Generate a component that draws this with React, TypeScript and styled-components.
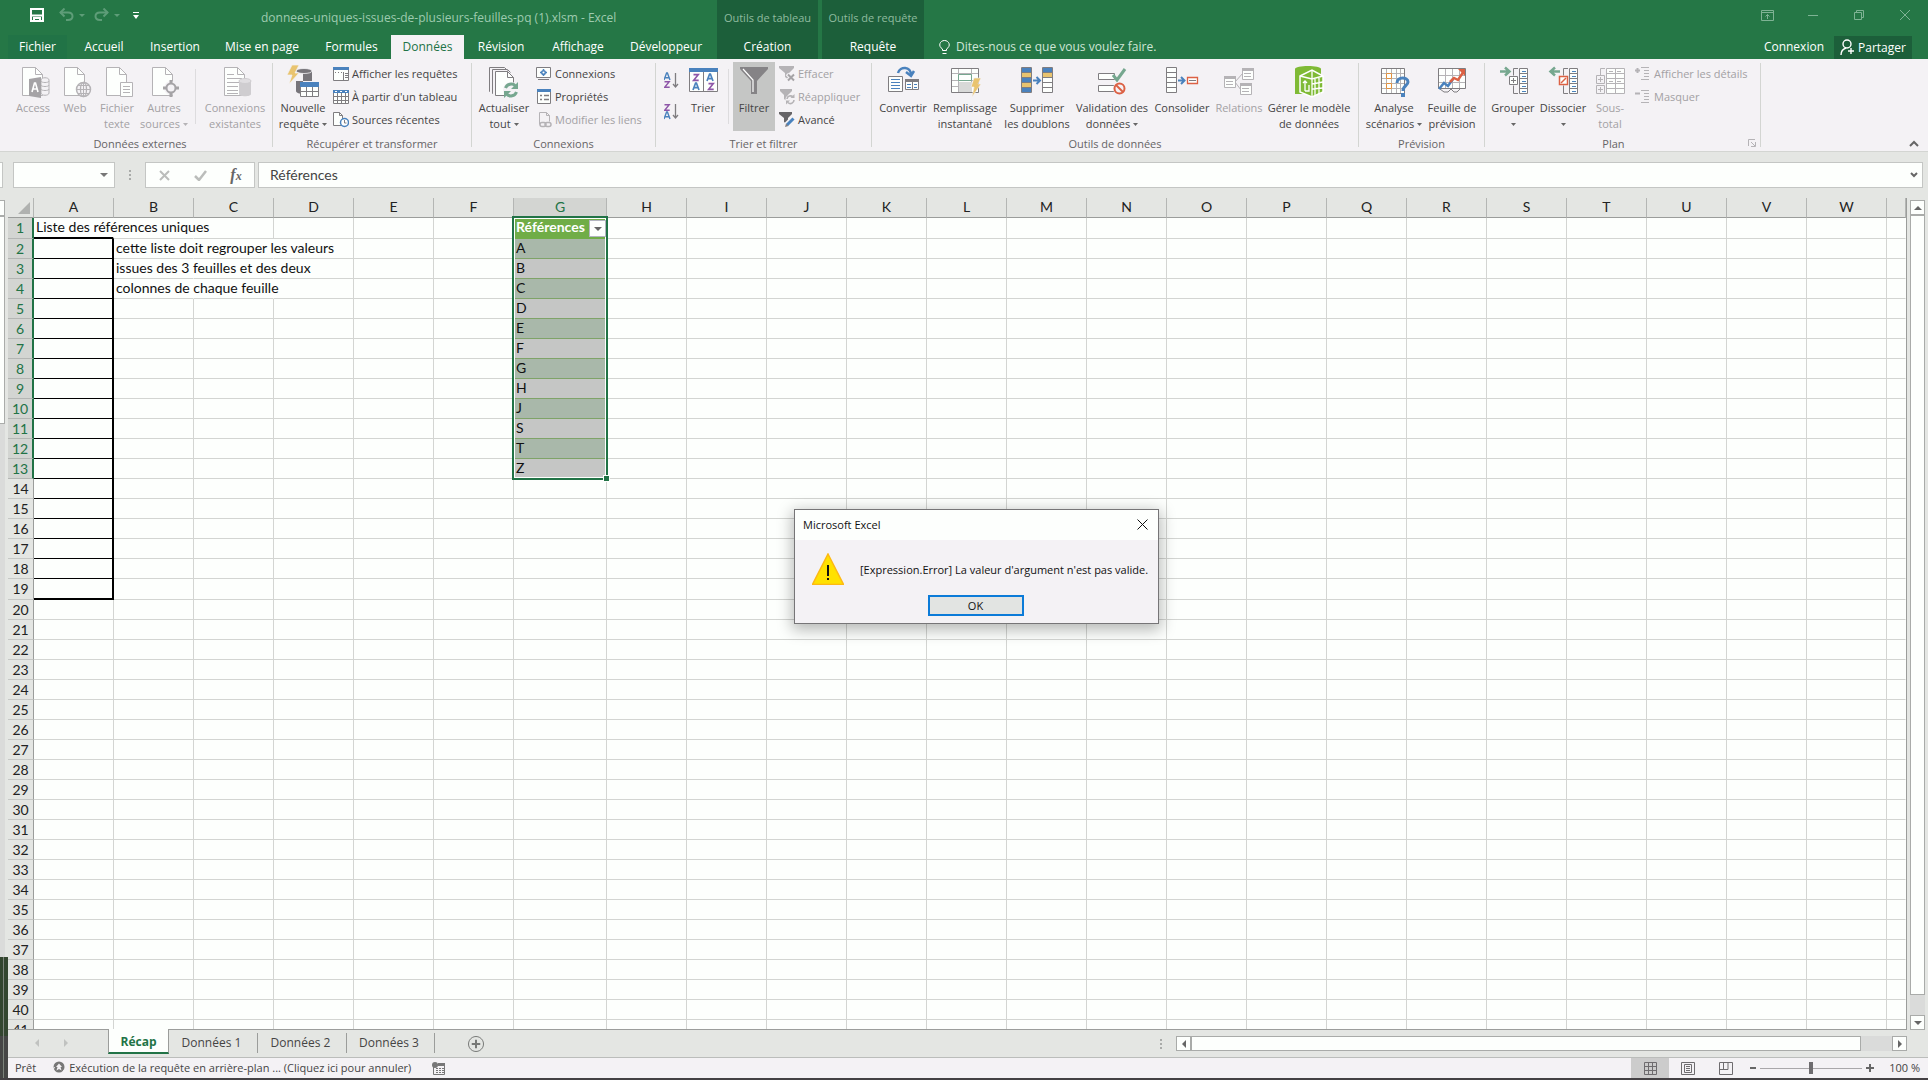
import React from "react";
import styled, { createGlobalStyle, css } from "styled-components";

const c = {
  green: "#257746",
  darkGreen: "#1c5f3a",
  accent: "#217346",
  ribbon: "#f4f2f5",
  chrome: "#e4e6e3",
  white: "#fdfffd",
  line: "#d3d5d2",
  edge: "#9b9d9b",
  text: "#444444",
  faint: "#a3a1a4",
  blue: "#4a82bd",
  gray: "#7f7d80",
  light: "#b5b3b6",
  red: "#dc6144",
  purple: "#8e56a8",
  teal: "#76a78f",
  gold: "#e9c46f",
};

const UI = `"Open Sans", "Noto Sans", sans-serif`;
const SHEET = `Lato, "Open Sans", sans-serif`;

const Global = createGlobalStyle`
  *, *::before, *::after { box-sizing: border-box; }
  body { margin: 0; font-family: ${UI}; font-size: 11px; color: ${c.text}; background: ${c.chrome}; }
  button, input { font: inherit; color: inherit; margin: 0; padding: 0; border: 0; background: none; border-radius: 0; outline: 0; }
  svg { display: block; flex: none; }
`;

const Page = styled.div`
  display: flex;
  flex-direction: column;
  height: 100vh;
  overflow: hidden;
`;

/* ---------- title bar and tabs ---------- */

const Header = styled.header`
  display: flex;
  flex: none;
  height: 59px;
  background: ${c.green};
  color: #ffffff;
`;
const HeaderMain = styled.div`
  flex: none;
  width: 717px;
`;
const HeaderEnd = styled.div`
  flex: 1;
`;
const TitleRow = styled.div<{ $end?: boolean }>`
  display: flex;
  align-items: center;
  height: 35px;
  justify-content: ${(p) => (p.$end ? "flex-end" : "flex-start")};
  padding: ${(p) => (p.$end ? "0 0 5px 0" : "0 0 0 30px")};
`;
const QuickAccess = styled.div`
  display: flex;
  width: 231px;
  padding-bottom: 5px;
`;
const IconButton = styled.button<{ $w: number; $ml?: number }>`
  display: flex;
  align-items: center;
  justify-content: center;
  flex: none;
  width: ${(p) => p.$w}px;
  margin-left: ${(p) => p.$ml ?? 0}px;
`;
const Title = styled.h1`
  margin: 0;
  font-size: 12px;
  line-height: 18px;
  font-weight: 400;
  color: #9ecbaf;
  white-space: nowrap;
`;
const Tabs = styled.nav`
  display: flex;
  height: 24px;
  padding-left: 8px;
`;
const Tab = styled.button<{ $w: number; $on?: boolean; $file?: boolean }>`
  flex: none;
  width: ${(p) => p.$w}px;
  font-size: 12px;
  line-height: 24px;
  white-space: nowrap;
  ${(p) => p.$on && css`background: ${c.ribbon}; color: ${c.accent};`}
  ${(p) => p.$file && css`background: ${c.accent}; margin-right: 3px;`}
`;
const Context = styled.div`
  flex: none;
  width: 101px;
  margin-right: 4px;
  background: ${c.darkGreen};
  text-align: center;
  & + & { width: 102px; margin-right: 0; }
`;
const ContextTitle = styled.div`
  height: 35px;
  line-height: 36px;
  color: #8fbb9f;
  white-space: nowrap;
`;
const TellRow = styled.div`
  display: flex;
  align-items: center;
  height: 24px;
  padding: 0 16px 0 14px;
`;
const Tell = styled.button`
  display: flex;
  align-items: center;
  gap: 5px;
  margin-right: auto;
  padding-bottom: 1px;
  font-size: 12px;
  color: #cfe6d6;
`;
const Login = styled.button`
  font-size: 12px;
  margin-right: 10px;
  padding-bottom: 1px;
`;
const Share = styled.button`
  display: flex;
  align-items: center;
  justify-content: center;
  gap: 4px;
  width: 78px;
  height: 23px;
  background: ${c.darkGreen};
  font-size: 12px;
`;

/* ---------- ribbon ---------- */

const Ribbon = styled.div`
  position: relative;
  display: flex;
  flex: none;
  height: 93px;
  padding-left: 8px;
  background: ${c.ribbon};
  border-bottom: 1px solid ${c.line};
`;
const Group = styled.section<{ $w: number }>`
  display: flex;
  flex-direction: column;
  flex: none;
  width: ${(p) => p.$w}px;
  height: 84px;
  margin-top: 4px;
  border-right: 1px solid ${c.line};
`;
const Tools = styled.div`
  display: flex;
  flex: none;
  height: 72px;
  padding-left: 4px;
`;
const GroupName = styled.div`
  display: flex;
  align-items: center;
  flex: none;
  height: 16px;
  color: #666466;
`;
const GroupText = styled.span`
  flex: 1;
  text-align: center;
`;
const Big = styled.button<{ $w: number; $off?: boolean; $on?: boolean }>`
  display: flex;
  flex-direction: column;
  align-items: center;
  flex: none;
  width: ${(p) => p.$w}px;
  height: 69px;
  margin-top: -1px;
  padding-top: 4px;
  line-height: 16px;
  white-space: nowrap;
  color: ${(p) => (p.$off ? c.faint : c.text)};
  background: ${(p) => (p.$on ? "#c5c6c5" : "transparent")};
  & > svg { margin-bottom: 2px; }
`;
const BigLabel = styled.span`
  display: flex;
  align-items: center;
  justify-content: center;
  flex: none;
  gap: 3px;
  height: 16px;
`;
const Split = styled.i<{ $gap: number }>`
  flex: none;
  width: 1px;
  height: 55px;
  margin: 6px ${(p) => p.$gap}px 0;
  background: #dddcde;
`;
const Stack = styled.div`
  display: flex;
  flex-direction: column;
  margin-top: -1px;
`;
const Small = styled.button<{ $off?: boolean }>`
  display: flex;
  align-items: center;
  gap: 3px;
  height: 23px;
  padding-left: 4px;
  white-space: nowrap;
  color: ${(p) => (p.$off ? c.faint : c.text)};
`;
const SortStack = styled.div`
  display: flex;
  flex-direction: column;
  gap: 11px;
  width: 22px;
  padding: 8px 0 0 4px;
`;
const Launcher = styled.button`
  width: 18px;
  padding-left: 6px;
`;
const Collapse = styled.button`
  align-self: flex-end;
  margin: 0 9px 4px auto;
`;

/* ---------- formula bar ---------- */

const FormulaBar = styled.div`
  display: flex;
  flex: none;
  height: 46px;
  padding: 10px 5px 10px 0;
`;
const Field = styled.div<{ $w?: number; $ml?: number }>`
  display: flex;
  align-items: center;
  flex: ${(p) => (p.$w ? "none" : "1")};
  width: ${(p) => (p.$w ? p.$w + "px" : "auto")};
  margin-left: ${(p) => p.$ml ?? 0}px;
  background: ${c.white};
  border: 1px solid #c4c6c4;
`;
const Stub = styled(Field)`
  border-left: 0;
`;
const NameInput = styled.input`
  flex: 1;
  min-width: 0;
`;
const FormulaInput = styled.input`
  flex: 1;
  padding-left: 11px;
  font-family: ${SHEET};
  font-size: 14px;
  line-height: 20px;
`;
const Grip = styled.div`
  display: flex;
  align-items: center;
  justify-content: center;
  width: 30px;
`;
const Fx = styled.i`
  font-family: "Liberation Serif", serif;
  font-size: 16px;
  font-weight: 700;
  line-height: 18px;
  color: #666;
  & > small { font-size: 12px; }
`;

/* ---------- work area ---------- */

const Work = styled.div`
  display: flex;
  flex: 1;
  min-height: 0;
  border-bottom: 2px solid #444144;
`;
const Behind = styled.div`
  display: flex;
  flex-direction: column;
  flex: none;
  width: 8px;
  padding-top: 2px;
`;
const BehindBox = styled.div<{ $h: number }>`
  flex: none;
  width: 5px;
  height: ${(p) => p.$h}px;
  background: ${c.white};
  border: 1px solid #aaacaa;
  border-left: 0;
`;
const BehindTrack = styled.div`
  flex: 1;
  background: linear-gradient(to right, #dadbda 5px, #e4e6e3 5px);
`;
const BehindDark = styled.div<{ $h: number; $c: string }>`
  flex: none;
  height: ${(p) => p.$h}px;
  background: linear-gradient(to right, ${(p) => p.$c} 3px, #7b837a 3px 4px, ${(p) => p.$c} 4px);
`;
const Book = styled.main`
  display: flex;
  flex-direction: column;
  flex: 1;
  min-width: 0;
`;
const SheetRow = styled.div`
  display: flex;
  flex: 1;
  min-height: 0;
`;
const SheetView = styled.div`
  flex: 1;
  min-width: 0;
  overflow: hidden;
  border-right: 1px solid ${c.edge};
  border-bottom: 1px solid ${c.edge};
  background: linear-gradient(${c.chrome} 19px, ${c.white} 19px);
`;
const Table = styled.table`
  width: 100%;
  table-layout: fixed;
  border-collapse: separate;
  border-spacing: 0;
  font-family: ${SHEET};
  font-size: 14px;
  color: #111111;
`;
const ColHead = styled.th<{ $on?: boolean }>`
  height: 20px;
  padding: 0;
  font-weight: 400;
  line-height: 17px;
  vertical-align: top;
  background: ${(p) => (p.$on ? c.line : c.chrome)};
  color: ${(p) => (p.$on ? c.accent : "#222222")};
  border-bottom: 1px solid ${c.edge};
  border-right: 1px solid #b4b6b4;
`;
const Corner = styled(ColHead)`
  & > svg { margin: 4px 3px 0 auto; }
`;
const RowHead = styled.th<{ $on: boolean; $tall: boolean }>`
  height: ${(p) => (p.$tall ? 21 : 20)}px;
  padding: 0;
  font-weight: 400;
  line-height: 19px;
  vertical-align: top;
  background: ${(p) => (p.$on ? c.line : c.chrome)};
  color: ${(p) => (p.$on ? c.accent : "#222222")};
  border-bottom: 1px solid ${(p) => (p.$on ? "#b4b6b4" : "#c6c8c6")};
  border-right: ${(p) => (p.$on ? `2px solid ${c.accent}` : `1px solid ${c.edge}`)};
`;
type CellKind = "plain" | "spill" | "box" | "boxTop" | "boxLast" | "head" | "even" | "odd";
const Cell = styled.td<{ $kind: CellKind }>`
  position: relative;
  padding: 0 0 0 2px;
  line-height: 18px;
  vertical-align: top;
  white-space: nowrap;
  border-right: 1px solid ${c.line};
  border-bottom: 1px solid ${c.line};
  ${(p) => p.$kind === "spill" && css`border-right-color: transparent;`}
  ${(p) => p.$kind === "boxTop" && css`border-right-color: transparent; border-bottom: 2px solid #000;`}
  ${(p) => p.$kind === "box" && css`border-right: 2px solid #000; border-bottom: 1px solid #000;`}
  ${(p) => p.$kind === "boxLast" && css`border-right: 2px solid #000; border-bottom: 2px solid #000;`}
  ${(p) => p.$kind === "head" && css`background: #70ad47; color: #fff; font-weight: 700; border-color: #70ad47;`}
  ${(p) => p.$kind === "even" && css`background: #a9b8aa; border-bottom-color: #7fa368;`}
  ${(p) => p.$kind === "odd" && css`background: #c5c6c5; border-bottom-color: #7fa368;`}
`;
const Selection = styled.div`
  position: absolute;
  z-index: 1;
  left: -2px;
  top: -2px;
  width: 96px;
  height: 264px;
  border: 2px solid ${c.accent};
  box-shadow: inset 0 0 0 1px ${c.white};
  pointer-events: none;
  &::after {
    content: "";
    position: absolute;
    right: -4px;
    bottom: -4px;
    width: 7px;
    height: 7px;
    background: ${c.accent};
    border: 1px solid ${c.white};
  }
`;
const FilterButton = styled.button`
  position: absolute;
  z-index: 2;
  right: 0;
  top: 2px;
  display: flex;
  align-items: center;
  justify-content: center;
  width: 17px;
  height: 17px;
  background: ${c.white};
  border: 1px solid #b3b5c0;
`;

/* ---------- scroll bars ---------- */

const VScroll = styled.div`
  display: flex;
  flex-direction: column;
  flex: none;
  width: 21px;
  padding: 2px 3px 0 3px;
`;
const HScroll = styled.div`
  display: flex;
  flex: none;
  width: 731px;
  height: 15px;
`;
const Arrow = styled.button`
  display: flex;
  align-items: center;
  justify-content: center;
  flex: none;
  width: 15px;
  height: 15px;
  background: ${c.white};
  border: 1px solid #a9aba9;
`;
const Thumb = styled.div<{ $grow: number }>`
  flex: ${(p) => p.$grow};
  background: ${c.white};
  border: 1px solid #a9aba9;
`;
const Track = styled.div<{ $grow: number }>`
  flex: ${(p) => p.$grow};
  background: #dadbda;
`;

/* ---------- sheet tabs and status ---------- */

const SheetBar = styled.div`
  display: flex;
  flex: none;
  height: 28px;
  padding-right: 21px;
  border-bottom: 1px solid #bbbdbb;
`;
const NavArrows = styled.div`
  display: flex;
  align-items: center;
  gap: 21px;
  width: 100px;
  padding: 0 0 1px 25px;
`;
const SheetTab = styled.button<{ $on?: boolean; $w: number }>`
  flex: none;
  width: ${(p) => p.$w}px;
  font-size: 12px;
  line-height: 20px;
  ${(p) =>
    p.$on
      ? css`
          margin-top: -1px;
          height: 25px;
          padding-top: 2px;
          background: ${c.white};
          color: ${c.accent};
          font-weight: 700;
          border-left: 1px solid ${c.edge};
          border-right: 1px solid ${c.edge};
          border-bottom: 2px solid ${c.accent};
        `
      : css`
          margin-top: 3px;
          height: 20px;
          padding-right: 3px;
          border-right: 1px solid ${c.edge};
        `}
`;
const AddSheet = styled.button`
  margin: 0 auto 0 33px;
`;
const SheetBarEnd = styled.div`
  display: flex;
  align-items: center;
`;
const Status = styled.footer`
  display: flex;
  align-items: center;
  flex: none;
  height: 20px;
  padding: 0 8px 0 7px;
  line-height: 15px;
  background: ${c.ribbon};
`;
const Ready = styled.span`
  padding-bottom: 2px;
`;
const Running = styled.button`
  display: flex;
  align-items: center;
  gap: 4px;
  margin: 0 20px 0 17px;
  padding-bottom: 2px;
`;
const Spacer = styled.div`
  flex: 1;
`;
const View = styled.button<{ $on?: boolean }>`
  display: flex;
  align-items: center;
  justify-content: center;
  width: 38px;
  height: 20px;
  background: ${(p) => (p.$on ? "#cccccc" : "transparent")};
`;
const ZoomArea = styled.div`
  display: flex;
  align-items: center;
  gap: 4px;
  margin-left: 5px;
`;
const Slider = styled.input`
  appearance: none;
  width: 102px;
  height: 12px;
  background: linear-gradient(#a9a7aa, #a9a7aa) center / 100% 1px no-repeat;
  &::-webkit-slider-thumb {
    appearance: none;
    width: 4px;
    height: 12px;
    background: #6e6c6f;
  }
`;
const Percent = styled.span`
  width: 42px;
  padding-bottom: 2px;
  text-align: right;
`;

/* ---------- dialog ---------- */

const Dialog = styled.div`
  position: absolute;
  z-index: 10;
  left: 794px;
  top: 509px;
  width: 365px;
  background: ${c.ribbon};
  border: 1px solid #767577;
  box-shadow: 0 4px 14px 2px rgba(0, 0, 0, 0.28);
  color: #111111;
`;
const DialogTitle = styled.div`
  display: flex;
  align-items: center;
  justify-content: space-between;
  height: 30px;
  padding: 0 10px 2px 8px;
  background: ${c.white};
`;
const DialogBody = styled.div`
  display: flex;
  align-items: center;
  gap: 16px;
  padding: 13px 0 0 17px;
  white-space: nowrap;
`;
const DialogActions = styled.div`
  display: flex;
  justify-content: center;
  padding: 10px 2px 7px 0;
`;
const OkButton = styled.button`
  width: 96px;
  height: 21px;
  background: #e2e4e2;
  border: 2px solid #0b7bd8;
`;

/* ---------- icons ---------- */

type Kids = { children: React.ReactNode };
const I32 = ({ children }: Kids) => (
  <svg width="32" height="32" viewBox="0 0 32 32" fill="none" overflow="visible" aria-hidden="true">{children}</svg>
);
const I16 = ({ children }: Kids) => (
  <svg width="16" height="16" viewBox="0 0 16 16" fill="none" aria-hidden="true">{children}</svg>
);
const Caret = ({ color = "#666", w = 5 }: { color?: string; w?: number }) => (
  <svg width={w} height="3" viewBox="0 0 5 3" preserveAspectRatio="none" aria-hidden="true"><path d="M0 0h5L2.500 3z" fill={color} /></svg>
);
const Sheet = ({ x = 5, col = c.light }: { x?: number; col?: string }) => (
  <g transform={`translate(${x} 0)`} stroke={col}><path d="M.5 1.500h13l7 7v21H.5z" fill={c.white} /><path d="M13.500 1.500v7h7" /></g>
);

const AccessIcon = () => (
  <I32><Sheet /><path d="M24 14v13c0 3 8 3 8 0V14c0-3-8-3-8 0z" fill={c.ribbon} stroke={c.light} /><path d="M24 15c0 2 8 2 8 0M24 19c0 2 8 2 8 0M24 23c0 2 8 2 8 0" stroke={c.light} /><path d="M12 13l12-2v21l-12-2z" fill="#a5a3a6" /><path d="M15 26l2.500-9h1l2.500 9M16 23h4" stroke="#fff" strokeWidth="1.600" /></I32>
);
const WebIcon = () => (
  <I32><Sheet /><circle cx="24.500" cy="23.500" r="7" fill={c.ribbon} stroke={c.light} strokeWidth="1.500" /><ellipse cx="24.500" cy="23.500" rx="3" ry="7" stroke={c.light} strokeWidth="1.300" /><path d="M17.500 23.500h14M19 19.500h11M19 27.500h11M24.500 16.500v14" stroke={c.light} /></I32>
);
const TextFileIcon = () => (
  <I32><Sheet /><path d="M19.500 16.500h12v14h-12z" fill={c.white} stroke={c.light} /><path d="M22 20.500h7M22 23.500h7M22 26.500h7" stroke={c.light} /></I32>
);
const OtherIcon = () => (
  <I32><Sheet x={4} /><circle cx="23" cy="22" r="7" fill={c.ribbon} /><circle cx="23" cy="22" r="4.500" fill={c.ribbon} stroke="#a5a3a6" strokeWidth="2" /><path d="M23 14v4M23 26v5M15 22h4M27 22h4" stroke="#a5a3a6" strokeWidth="3" /></I32>
);
const ExistingIcon = () => (
  <I32><Sheet /><path d="M8 8.500h7M8 12.500h15M8 16.500h12M8 20.500h11M8 24.500h11M8 27.500h11" stroke={c.light} /><path d="M20 15v13c0 3 12 3 12 0V15z" fill="#cfcdd0" /><ellipse cx="26" cy="15" rx="6" ry="2.500" fill="#e0dee1" stroke="#cfcdd0" /></I32>
);
const NewQueryIcon = () => (
  <I32><path d="M9 5v20c0 2 4 3 7 3V5zM9 5h16v10H9z" fill="#77757a" /><ellipse cx="17" cy="5" rx="8" ry="2.500" fill="#77757a" stroke="#f4f2f5" strokeWidth=".8" /><path d="M5-1h7L8 7h4L2 18l3-9H0z" fill={c.gold} stroke={c.ribbon} strokeWidth=".7" /><path d="M13.500 16.500h18v14h-18z" fill={c.white} stroke={c.gray} /><path d="M13 16h19v5H13z" fill={c.blue} /><path d="M14 25.500h17M19.500 21v9M25.500 21v9" stroke={c.gray} /></I32>
);
const ShowQueriesIcon = () => (
  <I16><path d="M.5 1.500h15v13H.5z" fill={c.white} stroke={c.gray} /><path d="M0 1h16v3H0z" fill={c.blue} /><path d="M10.500 6v8M2 6.500h1m2 0h1m2 0h1M12 7.500h3M12 9.500h3M12 11.500h3" stroke={c.gray} /></I16>
);
const FromTableIcon = () => (
  <I16><path d="M.5 1.500h15v13H.5z" fill={c.white} stroke={c.gray} /><path d="M0 1h16v3H0z" fill={c.blue} /><path d="M1 7.500h14M1 11.500h14M4.500 4v10M8.500 4v10M12.500 4v10" stroke={c.gray} /><path d="M2 2.500h2m3 0h2m3 0h2" stroke="#fff" /></I16>
);
const RecentIcon = () => (
  <I16><path d="M.5.5h6l3 3v10h-9z" fill={c.white} stroke={c.gray} /><path d="M6.500.5v3h3" stroke={c.gray} /><circle cx="11.500" cy="10.500" r="4" fill="#fff" stroke={c.blue} strokeWidth="1.500" /><path d="M11.500 8v3h2" stroke={c.gray} /></I16>
);
const RefreshIcon = () => (
  <I32><path d="M2 25.500h-.5v-24h15l3 3" stroke={c.gray} /><path d="M5 27.500h-.5v-24h15l3 3" stroke={c.gray} /><path d="M7.500 5.500h12l6 6v18h-18z" fill={c.white} stroke={c.gray} /><path d="M19.500 5.500v6h6" stroke={c.gray} /><circle cx="23" cy="24" r="8" fill={c.ribbon} /><path d="M17.500 22a6 6 0 0 1 10-2M28.500 26a6 6 0 0 1-10 2" stroke={c.teal} strokeWidth="3" /><path d="M30 16v7h-7zM16 32v-7h7z" fill={c.teal} /></I32>
);
const ConnectionsIcon = () => (
  <I16><path d="M.5 1.500h14v10H.5zM2 13.500h11" fill={c.white} stroke={c.gray} /><circle cx="7.500" cy="6.500" r="1.800" stroke={c.blue} strokeWidth="1.500" /><path d="M7.500 3v1.500m0 4V10M4 6.500h1.500m4 0H11" stroke={c.blue} strokeWidth="1.500" /></I16>
);
const PropertiesIcon = () => (
  <I16><path d="M1.500.5h13v14h-13z" fill={c.white} stroke={c.gray} /><path d="M1 0h14v3H1z" fill={c.blue} /><path d="M4 6.500h2m2 0h5M4 10.500h2m2 0h5" stroke={c.gray} strokeWidth="1.500" /></I16>
);
const LinksIcon = () => (
  <I16><path d="M3.500 12.500v-12h7l3 3v6" stroke={c.light} /><path d="M10.500.5v3h3" stroke={c.light} /><rect x="4" y="10.500" width="6" height="4" rx="2" stroke={c.light} strokeWidth="1.500" /><rect x="9" y="10.500" width="6" height="4" rx="2" stroke={c.light} strokeWidth="1.500" /></I16>
);
const A_UP = "M0 7l2.600-7h.8L6 7M1 4.700h4";
const Z_UP = "M.5.700h4.700L.7 6.300h5";
const SortIcon = ({ desc }: { desc?: boolean }) => (
  <svg width="15" height="20" viewBox="0 0 15 20" fill="none" aria-hidden="true">
    <g strokeWidth="1.400"><path d={desc ? Z_UP : A_UP} stroke={desc ? c.purple : c.blue} transform="translate(0 2)" /><path d={desc ? A_UP : Z_UP} stroke={desc ? c.blue : c.purple} transform="translate(0 10)" /></g>
    <path d="M11.500 2v14M9 13l2.500 3 2.500-3" stroke={c.gray} strokeWidth="1.300" />
  </svg>
);
const SortBigIcon = () => (
  <I32><path d="M2.500 2.500h28v23h-28z" fill={c.white} stroke={c.gray} /><path d="M2 2h29v4H2z" fill={c.blue} /><path d="M16.500 6v19" stroke={c.gray} /><g strokeWidth="1.700"><path d={Z_UP} stroke={c.purple} transform="translate(6 8)" /><path d={A_UP} stroke={c.blue} transform="translate(6 17)" /><path d={A_UP} stroke={c.blue} transform="translate(20 8)" /><path d={Z_UP} stroke={c.purple} transform="translate(21 17)" /></g></I32>
);
const FilterIcon = () => (
  <I32><path d="M2 1h28v2L19 15v13h-6V15L2 3z" fill="#858386" /><path d="M5 3l10 11v12" stroke="#fff" strokeWidth="1.200" /></I32>
);
const ClearIcon = () => (
  <I16><path d="M0 0h15v2l-5 5v7L6 11V7L0 2z" fill={c.light} /><path d="M8 8l7 7M15 8l-7 7" stroke={c.ribbon} strokeWidth="3.500" /><path d="M9 8.500l6 6M15 8.500l-6 6" stroke="#a5a3a6" strokeWidth="2" /></I16>
);
const ReapplyIcon = () => (
  <I16><path d="M1 0h12v2L9 6v7L5 10V6L1 2z" fill={c.light} /><circle cx="11.500" cy="10.500" r="5" fill={c.ribbon} /><path d="M8 10a3.500 3.500 0 0 1 6-2M15 11a3.500 3.500 0 0 1-6 2.500" stroke={c.light} strokeWidth="1.600" /><path d="M15.500 5v4h-4zM7 15.500v-4h4z" fill={c.light} /></I16>
);
const AdvancedIcon = () => (
  <I16><path d="M0 0h13v2L9 6v7L5 10V6L0 2z" fill="#666467" /><path d="M14 6L6 14" stroke={c.ribbon} strokeWidth="5" /><path d="M14.500 6.500L8 13" stroke={c.blue} strokeWidth="3" /><path d="M6 15l1-3.500L9.500 14z" fill={c.gray} /></I16>
);
const ConvertIcon = () => (
  <I32><path d="M1.500 10.500h14v15h-14z" fill={c.white} stroke={c.gray} /><path d="M4 13.500h9M4 16.500h9M4 19.500h9M4 22.500h9" stroke={c.blue} /><path d="M18.500 14.500h13v9h-13z" fill={c.white} stroke={c.gray} /><path d="M18 13h14v3H18z" fill={c.gray} /><path d="M25.500 16v8" stroke={c.gray} /><path d="M20 18.500h4M20 21.500h4M27 18.500h3M27 21.500h3" stroke={c.blue} /><path d="M11 7c2-7 13-7 13 2" stroke={c.blue} strokeWidth="2.500" /><path d="M19 6l5 4 3-5" stroke={c.blue} strokeWidth="2.500" /></I32>
);
const FlashFillIcon = () => (
  <I32><path d="M2.500 2.500h27v24h-27z" fill={c.white} stroke={c.gray} /><path d="M3 7.500h26M3 14.500h26M3 20.500h26M9.500 3v23M22.500 3v23" stroke={c.light} /><path d="M10 16h13v10H10z" fill="#d8d9d8" /><path d="M9.500 8.500h13v6h-13z" fill={c.white} stroke={c.teal} /><path d="M25 12h7l-3 6h3l-9 13 2-10h-3z" fill={c.gold} stroke={c.ribbon} strokeWidth=".6" /></I32>
);
const DuplicatesIcon = () => (
  <I32><path d="M1 1h9v26H1z" fill={c.blue} /><path d="M1 7h9v5H1zM1 16h9v5H1z" fill={c.gold} /><path d="M.5 1.500h10v25H.5zM1 6.500h9M1 11.500h9M1 16.500h9M1 21.500h9" stroke={c.gray} /><path d="M21.500 1.500h10v25h-10z" fill={c.white} /><path d="M22 2h9v5h-9z" fill={c.blue} /><path d="M22 7h9v5h-9z" fill={c.gold} /><path d="M21.500 1.500h10v25h-10zM22 6.500h9M22 11.500h9M22 16.500h9M22 21.500h9" stroke={c.gray} /><path d="M12 14.500h6M15.500 11l3.500 3.500-3.500 3.500" stroke={c.blue} strokeWidth="2" /></I32>
);
const ValidationIcon = () => (
  <I32><path d="M2.500 7.500h16v6h-16zM2.500 19.500h16v6h-16z" fill={c.white} stroke={c.gray} /><path d="M17 9l4 5 8-11" stroke={c.teal} strokeWidth="3" /><circle cx="23.500" cy="22.500" r="6.500" fill={c.ribbon} /><circle cx="23.500" cy="22.500" r="5" stroke={c.red} strokeWidth="2" /><path d="M20 19l7 7" stroke={c.red} strokeWidth="2" /></I32>
);
const ConsolidateIcon = () => (
  <I32><path d="M.5 1.500h10v25H.5zM1 6.500h9M1 11.500h9M1 16.500h9M1 21.500h9" fill={c.white} stroke={c.gray} /><path d="M12 14.500h6M15 11l3.500 3.500L15 18" stroke={c.blue} strokeWidth="2" /><path d="M21.500 11.500h10v6h-10z" fill={c.white} stroke={c.red} strokeWidth="1.300" /><path d="M23 14.500h7" stroke={c.gray} /></I32>
);
const RelationsIcon = () => (
  <I32><g stroke={c.light} fill={c.white}><path d="M12 16l8-9M12 16l6 8" /><path d="M1.500 11.500h11v10h-11zM19.500 2.500h11v11h-11zM17.500 17.500h11v11h-11z" /></g><path d="M1 10h12v3H1zM19 2h12v3H19zM17 17h12v3H17z" fill={c.light} /><path d="M3 15.500h7M3 18.500h7M21 7.500h7M21 10.500h7M19 22.500h7M19 25.500h7" stroke={c.light} /></I32>
);
const ModelIcon = () => (
  <I32><path d="M2 3c0-4 26-4 26 0v25H2z" fill="#7fba35" /><path d="M7 10l12-6 11 6v16l-11 5-12-5z" fill="#7fba35" stroke="#fff" strokeWidth="1.500" /><path d="M19 5v26M7 10l12 3 11-3M22 13v16M26 12v16M19 18l11-2M19 23l11-1" stroke="#fff" strokeWidth="1.300" /><path d="M12 25V15M10 17l2-2 2 2M12 25h4v-6" stroke="#fff" strokeWidth="1.300" /></I32>
);
const AnalysisIcon = () => (
  <I32><path d="M3.500 2.500h23v25h-23z" fill={c.white} stroke={c.gray} /><path d="M4 7.500h22M4 12.500h22M4 17.500h22M4 22.500h22M8.500 3v24M13.500 3v24M18.500 3v24M22.500 3v24" stroke={c.light} /><path d="M8.500 7.500h5v5h-5zM8.500 17.500h5v5h-5z" fill={c.white} stroke="#e0913f" /><path d="M19 17c0-7 11-6 11-1 0 4-5 3-5 9" stroke={c.blue} strokeWidth="3" /><path d="M23 27h4v4h-4z" fill={c.blue} /></I32>
);
const ForecastIcon = () => (
  <I32><path d="M2.500 2.500h27v20h-27z" fill={c.white} stroke={c.gray} /><path d="M3 9.500h26M3 16.500h26M9.500 3v19M16.500 3v19M23.500 3v19" stroke={c.light} /><path d="M4 23l4 3h4l3-3 3 3h3l3-3" stroke={c.gray} /><path d="M3 23l5-6 4 3 5-7" stroke={c.blue} strokeWidth="2.500" /><path d="M14 16l4-4 4 2 6-9" stroke={c.red} strokeWidth="2.500" /><path d="M22 3h7v7z" fill={c.red} /></I32>
);
const OutlineRows = () => (
  <><path d="M22.500 2.500h8v25h-8zM23 7.500h8M23 12.500h8M23 17.500h8M23 22.500h8" fill={c.white} stroke={c.gray} /><path d="M25 5.500h4M25 10.500h4M25 15.500h4M25 20.500h4M25 25.500h4" stroke={c.blue} /><path d="M21 2.500h-4.500v7M21 27.500h-4.500v-8" stroke={c.gray} /></>
);
const GroupIcon = () => (
  <I32><OutlineRows /><path d="M12.500 10.500h8v8h-8z" fill={c.white} stroke={c.gray} /><path d="M14 14.500h5M16.500 12v5" stroke={c.gray} /><path d="M3 5.500h9M8 1.500l4.500 4L8 9.500" stroke={c.teal} strokeWidth="2.500" /></I32>
);
const UngroupIcon = () => (
  <I32><OutlineRows /><path d="M12.500 10.500h8v8h-8z" fill={c.white} stroke={c.red} strokeWidth="1.500" /><path d="M14 17l5-5" stroke={c.red} strokeWidth="1.500" /><path d="M13 5.500H4M8 1.500l-4.500 4L8 9.500" stroke={c.teal} strokeWidth="2.500" /></I32>
);
const SubtotalIcon = () => (
  <I32><path d="M12.500 2.500h18v25h-18zM12 7.500h18M12 12.500h18M12 17.500h18M12 22.500h18M21.500 3v24" fill={c.white} stroke={c.light} /><path d="M11 2.500H6.500V9M2.500 9.500h8v8h-8zM2.500 19.500h8v8h-8zM4 13.500h5M6.500 11v5M4 23.500h5M6.500 21v5M15 5.500h4M15 15.500h4M23 5.500h4M23 15.500h4" stroke={c.light} /></I32>
);
const DetailIcon = ({ plus }: { plus?: boolean }) => (
  <I16><path d="M0 4.500h5" stroke={c.light} strokeWidth="2" />{plus && <path d="M2.500 2v5" stroke={c.light} strokeWidth="2" />}<path d="M6 1.500h8M9 4.500h5M9 7.500h5M9 10.500h5M6 13.500h8" stroke={c.light} /></I16>
);
const UndoIcon = ({ flip }: { flip?: boolean }) => (
  <svg width="15" height="14" viewBox="0 0 15 14" fill="none" aria-hidden="true">
    <g transform={flip ? "translate(15 0) scale(-1 1)" : undefined} stroke="#5e9d78" strokeWidth="2"><path d="M1 4.500h8c6 0 6 7.500 0 7.500H7" /><path d="M5.500.5l-4 4 4 4" /></g>
  </svg>
);
const Dots = () => (
  <svg width="2" height="10" viewBox="0 0 2 10" aria-hidden="true"><path d="M0 0h2v2H0zM0 4h2v2H0zM0 8h2v2H0z" fill="#a9aba9" /></svg>
);
const Tri = ({ dir, color = "#666" }: { dir: "u" | "d" | "l" | "r"; color?: string }) => (
  <svg width="8" height="8" viewBox="0 0 8 8" aria-hidden="true">
    <path d={{ u: "M0 6h8L4 2z", d: "M0 2h8L4 6z", l: "M6 0v8L2 4z", r: "M2 0v8l4-4z" }[dir]} fill={color} />
  </svg>
);
const Stroke = ({ w, h, d, color, sw = 1 }: { w: number; h: number; d: string; color: string; sw?: number }) => (
  <svg width={w} height={h} viewBox={`0 0 ${w} ${h}`} fill="none" stroke={color} strokeWidth={sw} aria-hidden="true"><path d={d} /></svg>
);

/* ---------- pieces ---------- */

type BigProps = { w: number; icon: React.ReactNode; a: string; b?: string; menu?: boolean; off?: boolean; on?: boolean };
const BigButton = ({ w, icon, a, b, menu, off, on }: BigProps) => (
  <Big $w={w} $off={off} $on={on}>
    {icon}
    <BigLabel>{a}</BigLabel>
    {(b || menu) && <BigLabel>{b}{menu && <Caret color={off ? c.light : "#666"} />}</BigLabel>}
  </Big>
);
const SmallButton = ({ icon, label, off }: { icon: React.ReactNode; label: string; off?: boolean }) => (
  <Small $off={off}>{icon}{label}</Small>
);

const TABS: [string, number][] = [
  ["Accueil", 68], ["Insertion", 74], ["Mise en page", 100], ["Formules", 79],
  ["Données", 73], ["Révision", 74], ["Affichage", 80], ["Développeur", 96],
];
const COLS = "ABCDEFGHIJKLMNOPQRSTUVW".split("");
const REFS = ["A", "B", "C", "D", "E", "F", "G", "H", "J", "S", "T", "Z"];
const NOTES: Record<string, string> = {
  A1: "Liste des références uniques",
  B2: "cette liste doit regrouper les valeurs",
  B3: "issues des 3 feuilles et des deux",
  B4: "colonnes de chaque feuille",
};
const SPILL = new Set(["B1", "B2", "C2", "B3", "C3", "B4", "C4"]);

function kindOf(col: string, row: number): CellKind {
  if (col === "A" && row === 1) return "boxTop";
  if (col === "A" && row < 19) return "box";
  if (col === "A" && row === 19) return "boxLast";
  if (col === "G" && row === 1) return "head";
  if (col === "G" && row <= 13) return row % 2 ? "odd" : "even";
  return SPILL.has(col + row) ? "spill" : "plain";
}

const Grid = () => (
  <Table>
    <colgroup>
      <col width={26} />
      {COLS.map((n) => <col key={n} width={n === "G" ? 93 : 80} />)}
      <col />
    </colgroup>
    <thead>
      <tr>
        <Corner aria-label="Tout sélectionner"><svg width="12" height="12" viewBox="0 0 12 12" aria-hidden="true"><path d="M12 0v12H0z" fill="#b0b2b0" /></svg></Corner>
        {COLS.map((n) => <ColHead key={n} scope="col" $on={n === "G"}>{n}</ColHead>)}
        <ColHead />
      </tr>
    </thead>
    <tbody>
      {Array.from({ length: 41 }, (_, i) => i + 1).map((row) => (
        <tr key={row}>
          <RowHead scope="row" $on={row <= 13} $tall={row === 1 || row === 19}>{row}</RowHead>
          {COLS.map((col) => (
            <Cell key={col} $kind={kindOf(col, row)}>
              {NOTES[col + row]}
              {col === "G" && row === 1 && (
                <>Références<FilterButton aria-label="Filtrer Références"><Tri dir="d" /></FilterButton><Selection /></>
              )}
              {col === "G" && row > 1 && REFS[row - 2]}
            </Cell>
          ))}
          <Cell $kind="spill" />
        </tr>
      ))}
    </tbody>
  </Table>
);

export default function App() {
  return (
    <Page>
      <Global />
      <Header>
        <HeaderMain>
          <TitleRow>
            <QuickAccess>
              <IconButton $w={14} aria-label="Enregistrer"><svg width="14" height="14" viewBox="0 0 14 14" fill="none"><path d="M1 1h12v12H1z" stroke="#fff" strokeWidth="2" /><path d="M2 7.500h10M4 14v-4h6v4" stroke="#fff" strokeWidth="2" /></svg></IconButton>
              <IconButton $w={15} $ml={15} aria-label="Annuler"><UndoIcon /></IconButton>
              <IconButton $w={6} $ml={5} aria-label="Annulations"><Caret color="#5e9d78" w={6} /></IconButton>
              <IconButton $w={15} $ml={9} aria-label="Rétablir"><UndoIcon flip /></IconButton>
              <IconButton $w={6} $ml={5} aria-label="Rétablissements"><Caret color="#5e9d78" w={6} /></IconButton>
              <IconButton $w={6} $ml={13} aria-label="Personnaliser"><svg width="6" height="7" viewBox="0 0 6 7"><path d="M0 0h6v1H0zM0 3h6L3 7z" fill="#fff" /></svg></IconButton>
            </QuickAccess>
            <Title>donnees-uniques-issues-de-plusieurs-feuilles-pq (1).xlsm - Excel</Title>
          </TitleRow>
          <Tabs>
            <Tab $w={59} $file>Fichier</Tab>
            {TABS.map(([name, w]) => <Tab key={name} $w={w} $on={name === "Données"}>{name}</Tab>)}
          </Tabs>
        </HeaderMain>
        <Context><ContextTitle>Outils de tableau</ContextTitle><Tab $w={101}>Création</Tab></Context>
        <Context><ContextTitle>Outils de requête</ContextTitle><Tab $w={102}>Requête</Tab></Context>
        <HeaderEnd>
          <TitleRow $end>
            <IconButton $w={46} aria-label="Options d'affichage du ruban"><Stroke w={13} h={11} d="M.5.5h12v10H.5zM1 2.500h11M6.500 4.500V9M4.500 6.500l2-2 2 2" color="#7eb394" /></IconButton>
            <IconButton $w={46} aria-label="Réduire"><Stroke w={10} h={1} d="M0 .5h10" color="#7eb394" /></IconButton>
            <IconButton $w={46} aria-label="Niveau inférieur"><Stroke w={10} h={10} d="M.5 2.500h7v7h-7zM2.500 2.500v-2h7v7h-2" color="#7eb394" /></IconButton>
            <IconButton $w={46} aria-label="Fermer"><Stroke w={10} h={10} d="M0 0l10 10M10 0L0 10" color="#7eb394" /></IconButton>
          </TitleRow>
          <TellRow>
            <Tell><svg width="13" height="16" viewBox="0 0 13 16" fill="none" stroke="#fff"><path d="M4.500 11.500V10c-5-3-2.500-8.500 2-8.500s7 5.500 2 8.500v1.500zM4.500 14.500h4" /></svg>Dites-nous ce que vous voulez faire.</Tell>
            <Login>Connexion</Login>
            <Share><svg width="14" height="16" viewBox="0 0 14 16" fill="none" stroke="#fff" strokeWidth="1.400"><circle cx="7" cy="5" r="4" /><path d="M1 16c0-4 2-6 5-7M11 9v6M8 12h6" /></svg>Partager</Share>
          </TellRow>
        </HeaderEnd>
      </Header>

      <Ribbon>
        <Group $w={265}>
          <Tools>
            <BigButton w={42} off icon={<AccessIcon />} a="Access" />
            <BigButton w={42} off icon={<WebIcon />} a="Web" />
            <BigButton w={42} off icon={<TextFileIcon />} a="Fichier" b="texte" />
            <BigButton w={52} off icon={<OtherIcon />} a="Autres" b="sources" menu />
            <Split $gap={5} />
            <BigButton w={68} off icon={<ExistingIcon />} a="Connexions" b="existantes" />
          </Tools>
          <GroupName><GroupText>Données externes</GroupText></GroupName>
        </Group>
        <Group $w={199}>
          <Tools>
            <BigButton w={52} icon={<NewQueryIcon />} a="Nouvelle" b="requête" menu />
            <Stack>
              <SmallButton icon={<ShowQueriesIcon />} label="Afficher les requêtes" />
              <SmallButton icon={<FromTableIcon />} label="À partir d'un tableau" />
              <SmallButton icon={<RecentIcon />} label="Sources récentes" />
            </Stack>
          </Tools>
          <GroupName><GroupText>Récupérer et transformer</GroupText></GroupName>
        </Group>
        <Group $w={184}>
          <Tools>
            <BigButton w={56} icon={<RefreshIcon />} a="Actualiser" b="tout" menu />
            <Stack>
              <SmallButton icon={<ConnectionsIcon />} label="Connexions" />
              <SmallButton icon={<PropertiesIcon />} label="Propriétés" />
              <SmallButton off icon={<LinksIcon />} label="Modifier les liens" />
            </Stack>
          </Tools>
          <GroupName><GroupText>Connexions</GroupText></GroupName>
        </Group>
        <Group $w={216}>
          <Tools>
            <SortStack>
              <button aria-label="Trier de A à Z"><SortIcon /></button>
              <button aria-label="Trier de Z à A"><SortIcon desc /></button>
            </SortStack>
            <BigButton w={42} icon={<SortBigIcon />} a="Trier" />
            <Split $gap={4} />
            <BigButton w={42} on icon={<FilterIcon />} a="Filtrer" />
            <Stack>
              <SmallButton off icon={<ClearIcon />} label="Effacer" />
              <SmallButton off icon={<ReapplyIcon />} label="Réappliquer" />
              <SmallButton icon={<AdvancedIcon />} label="Avancé" />
            </Stack>
          </Tools>
          <GroupName><GroupText>Trier et filtrer</GroupText></GroupName>
        </Group>
        <Group $w={487}>
          <Tools>
            <BigButton w={54} icon={<ConvertIcon />} a="Convertir" />
            <BigButton w={70} icon={<FlashFillIcon />} a="Remplissage" b="instantané" />
            <BigButton w={74} icon={<DuplicatesIcon />} a="Supprimer" b="les doublons" />
            <BigButton w={76} icon={<ValidationIcon />} a="Validation des" b="données" menu />
            <BigButton w={64} icon={<ConsolidateIcon />} a="Consolider" />
            <BigButton w={50} off icon={<RelationsIcon />} a="Relations" />
            <BigButton w={90} icon={<ModelIcon />} a="Gérer le modèle" b="de données" />
          </Tools>
          <GroupName><GroupText>Outils de données</GroupText></GroupName>
        </Group>
        <Group $w={126}>
          <Tools>
            <BigButton w={62} icon={<AnalysisIcon />} a="Analyse" b="scénarios" menu />
            <BigButton w={54} icon={<ForecastIcon />} a="Feuille de" b="prévision" />
          </Tools>
          <GroupName><GroupText>Prévision</GroupText></GroupName>
        </Group>
        <Group $w={276}>
          <Tools>
            <BigButton w={48} icon={<GroupIcon />} a="Grouper" menu />
            <BigButton w={52} icon={<UngroupIcon />} a="Dissocier" menu />
            <BigButton w={42} off icon={<SubtotalIcon />} a="Sous-" b="total" />
            <Stack>
              <SmallButton off icon={<DetailIcon plus />} label="Afficher les détails" />
              <SmallButton off icon={<DetailIcon />} label="Masquer" />
            </Stack>
          </Tools>
          <GroupName>
            <GroupText>Plan</GroupText>
            <Launcher aria-label="Options du plan"><Stroke w={8} h={8} d="M.5 7V.5H7M3 3l4 4M7.500 3v4.500H3" color={c.light} /></Launcher>
          </GroupName>
        </Group>
        <Collapse aria-label="Réduire le ruban"><Stroke w={10} h={7} d="M1 6l4-4 4 4" color="#666" sw={2} /></Collapse>
      </Ribbon>

      <FormulaBar>
        <Stub $w={3} />
        <Field $w={102} $ml={10}>
          <NameInput aria-label="Zone Nom" />
          <IconButton $w={20} aria-label="Noms"><Tri dir="d" color="#777" /></IconButton>
        </Field>
        <Grip><Dots /></Grip>
        <Field $w={110}>
          <IconButton $w={36} aria-label="Annuler la saisie"><Stroke w={11} h={11} d="M1 1l9 9M10 1l-9 9" color="#bbbdbb" sw={2} /></IconButton>
          <IconButton $w={36} aria-label="Entrer"><Stroke w={13} h={11} d="M1 6l4 4 7-9" color="#bbbdbb" sw={2.500} /></IconButton>
          <IconButton $w={36} aria-label="Insérer une fonction"><Fx>f<small>x</small></Fx></IconButton>
        </Field>
        <Field $ml={3}>
          <FormulaInput aria-label="Barre de formule" defaultValue="Références" />
          <IconButton $w={16} aria-label="Développer la barre de formule"><Stroke w={8} h={6} d="M1 1l3 3 3-3" color="#666" sw={2} /></IconButton>
        </Field>
      </FormulaBar>

      <Work>
        <Behind>
          <BehindBox $h={16} />
          <BehindBox $h={208} />
          <BehindTrack />
          <BehindDark $h={79} $c="#33462f" />
          <BehindDark $h={42} $c="#454645" />
        </Behind>
        <Book>
          <SheetRow>
            <SheetView><Grid /></SheetView>
            <VScroll>
              <Arrow aria-label="Défiler vers le haut"><Tri dir="u" /></Arrow>
              <Thumb $grow={780} />
              <Track $grow={20} />
              <Arrow aria-label="Défiler vers le bas"><Tri dir="d" /></Arrow>
            </VScroll>
          </SheetRow>
          <SheetBar>
            <NavArrows><Tri dir="l" color="#c0c2c0" /><Tri dir="r" color="#c0c2c0" /></NavArrows>
            <SheetTab $on $w={61}>Récap</SheetTab>
            <SheetTab $w={89}>Données 1</SheetTab>
            <SheetTab $w={89}>Données 2</SheetTab>
            <SheetTab $w={88}>Données 3</SheetTab>
            <AddSheet aria-label="Nouvelle feuille"><Stroke w={16} h={16} d="M8 .5a7.500 7.500 0 1 0 .01 0zM4 7.500h8v1H4zM7.500 4h1v8h-1z" color="#777977" /></AddSheet>
            <SheetBarEnd>
              <Grip><Dots /></Grip>
              <HScroll>
                <Arrow aria-label="Défiler vers la gauche"><Tri dir="l" /></Arrow>
                <Thumb $grow={670} />
                <Track $grow={31} />
                <Arrow aria-label="Défiler vers la droite"><Tri dir="r" /></Arrow>
              </HScroll>
            </SheetBarEnd>
          </SheetBar>
          <Status>
            <Ready>Prêt</Ready>
            <Running>
              <svg width="12" height="12" viewBox="0 0 12 12" aria-hidden="true"><circle cx="6" cy="6" r="5.500" fill="#777" /><path d="M6 2.500L9 6H7.500l1 3.500L6 8 3.500 9.500l1-3.500H3z" fill={c.ribbon} /><path d="M0 7.500l2-1M10 11l1-2" stroke={c.ribbon} /></svg>
              Exécution de la requête en arrière-plan ... (Cliquez ici pour annuler)
            </Running>
            <IconButton $w={14} aria-label="Enregistrer une macro"><svg width="13" height="13" viewBox="0 0 13 13" fill="none"><path d="M1.500 2.500h11v10h-11z" stroke="#777" /><path d="M6 1h7v3H6z" fill="#777" /><circle cx="3" cy="3" r="3" fill="#777" /><path d="M4 6.500h2m1 0h2m1 0h2M4 8.500h2m1 0h2m1 0h2M4 10.500h2m1 0h2m1 0h2" stroke="#777" /></svg></IconButton>
            <Spacer />
            <View $on aria-label="Normal"><Stroke w={13} h={13} d="M.5.5h12v12H.5zM.5 4.500h12M.5 8.500h12M4.500.5v12M8.500.5v12" color="#6e6c6f" /></View>
            <View aria-label="Mise en page"><Stroke w={14} h={13} d="M.5.5h13v12H.5zM3.500 2.500h7v8h-7zM5 4.500h4M5 6.500h4M5 8.500h4" color="#6e6c6f" /></View>
            <View aria-label="Aperçu des sauts de page"><Stroke w={14} h={13} d="M.5.5h13v12H.5zM4.500.5v7M.5 7.500h8.500v-7" color="#6e6c6f" /></View>
            <ZoomArea>
              <button aria-label="Zoom arrière"><Stroke w={6} h={8} d="M0 4h6" color="#666" sw={2} /></button>
              <Slider type="range" min={0} max={100} defaultValue={50} aria-label="Zoom" />
              <button aria-label="Zoom avant"><Stroke w={8} h={8} d="M0 4h8M4 0v8" color="#666" sw={2} /></button>
              <Percent>100 %</Percent>
            </ZoomArea>
          </Status>
        </Book>
      </Work>

      <Dialog role="alertdialog" aria-labelledby="dlg-title" aria-describedby="dlg-text">
        <DialogTitle>
          <span id="dlg-title">Microsoft Excel</span>
          <button aria-label="Fermer"><Stroke w={11} h={11} d="M.5.5l10 10M10.500.5l-10 10" color="#111" /></button>
        </DialogTitle>
        <DialogBody>
          <svg width="32" height="32" viewBox="0 0 32 32" aria-hidden="true"><path d="M16 1l15.500 30.500H.5z" fill="#ffe100" stroke="#fdb913" strokeWidth="1.500" /><path d="M15 12h2v11h-2zM15 25h2v2h-2z" fill="#111" /></svg>
          <span id="dlg-text">[Expression.Error] La valeur d'argument n'est pas valide.</span>
        </DialogBody>
        <DialogActions><OkButton>OK</OkButton></DialogActions>
      </Dialog>
    </Page>
  );
}
